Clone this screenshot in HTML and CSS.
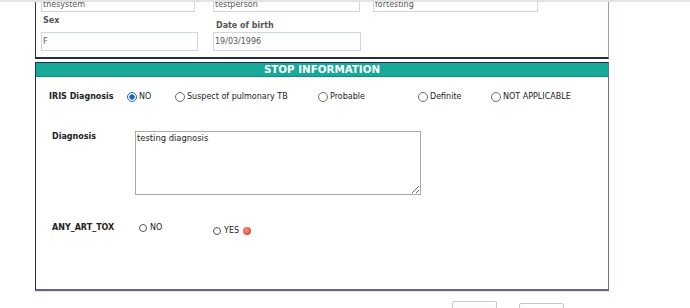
FILE: index.html
```html
<!DOCTYPE html>
<html>
<head lang="en">
    <meta charset="UTF-8">
    <title>Stop information</title>
    <link rel="stylesheet" href="styles.css">
</head>
<body>
<div class="topbar"></div>
<div class="page">
    <div class="patient">
        <div class="row">
            <input class="txt cut w154" type="text" value="thesystem"/>
            <input class="txt cut w147" type="text" value="testperson"/>
            <input class="txt cut w165" type="text" value="fortesting"/>
        </div>
        <div class="row">
            <div class="field">
                <label class="lbl sex">Sex</label>
                <input class="txt w157" type="text" value="F"/>
            </div>
            <div class="field">
                <label class="lbl dob">Date of birth</label>
                <input class="txt w148" type="text" value="19/03/1996"/>
            </div>
        </div>
    </div>

    <div class="stop">
        <div class="stop-head">STOP INFORMATION</div>
        <div class="stop-body">
            <div class="iris">
                <span class="q">IRIS Diagnosis</span>
                <label class="opt o48"><input type="radio" name="iris" checked/>NO</label>
                <label class="opt o143"><input type="radio" name="iris"/>Suspect of pulmonary TB</label>
                <label class="opt o100"><input type="radio" name="iris"/>Probable</label>
                <label class="opt o73"><input type="radio" name="iris"/>Definite</label>
                <label class="opt"><input type="radio" name="iris"/>NOT APPLICABLE</label>
            </div>
            <div class="diag">
                <span class="q">Diagnosis</span>
                <textarea>testing diagnosis</textarea>
            </div>
            <div class="tox">
                <span class="q">ANY_ART_TOX</span>
                <label class="opt small o74"><input type="radio" name="tox"/>NO</label>
                <label class="opt small yes"><input type="radio" name="tox"/>YES<span class="dot"></span></label>
            </div>
        </div>
    </div>

    <div class="buttons">
        <button class="btn"></button>
        <button class="btn low"></button>
    </div>
</div>
</body>
</html>
```

FILE: styles.css
```css
*{
    padding: 0;
    margin: 0;
    box-sizing: border-box;
}
html, body{
    height: 100%;
    overflow: hidden;
}
body{
    background: #fff;
    font-family: "DejaVu Sans", Verdana, sans-serif;
    font-size: 8px;
    color: #222;
}
.topbar{
    position: fixed;
    left: 0;
    top: 0;
    width: 100%;
    height: 2px;
    background: #e3e3e3;
    z-index: 2;
}
.page{
    margin-left: 35px;
    width: 574px;
}

/* patient box (scrolled, top cut off) */
.patient{
    margin-top: -8px;
    padding: 0 0 6px 5px;
    border-left: 1px solid #2c2c4a;
    border-right: 1px solid #9a9acc;
    border-bottom: 2px solid #2c2c4a;
}
.row{
    display: flex;
}
.row > .txt:nth-child(1){ margin-right: 18px; }
.row > .txt:nth-child(2){ margin-right: 13px; }
.field{
    display: flex;
    flex-direction: column;
    width: 172px;
}
.lbl{
    font-weight: bold;
    color: #555;
    line-height: 10px;
    padding-left: 2px;
}
.lbl.sex{ margin: 4px 0 6px; }
.lbl.dob{ margin: 9px 0 1px; padding-left: 3px; }
.txt{
    height: 20px;
    border: 1px solid #c9d9df;
    font-family: inherit;
    font-size: 8px;
    color: #555;
    padding: 0 1px;
    outline: none;
}
.txt.cut{ padding-top: 5px; }
.field .txt{ height: 19px; }
.w154{ width: 154px; }
.w147{ width: 147px; }
.w165{ width: 165px; }
.w157{ width: 157px; }
.w148{ width: 148px; }

/* stop information */
.stop{
    margin-top: 3px;
    border-top: 1px solid #2a2a48;
    border-left: 1px solid #2a2a48;
    border-right: 1px solid #6a6aae;
    border-bottom: 2px solid #62628a;
    box-shadow: 0 1px 1px #e4e4ea;
}
.stop-head{
    height: 14px;
    background: #18a999;
    border-bottom: 1px solid #0f8b7e;
    color: #fff;
    font-weight: bold;
    font-size: 10.3px;
    line-height: 13px;
    text-align: center;
}
.stop-body{
    height: 212px;
    padding-top: 14px;
}
.q{
    font-weight: bold;
    line-height: 10px;
}
.iris{
    display: flex;
    align-items: center;
    padding-left: 13px;
    height: 12px;
}
.iris .q{ width: 78px; }
.opt{
    display: flex;
    align-items: center;
    line-height: 12px;
}
.o48{ width: 48px; }
.o143{ width: 143px; }
.o100{ width: 100px; }
.o73{ width: 73px; }
.o74{ width: 74px; }
.opt input{
    appearance: none;
    -webkit-appearance: none;
    width: 10px;
    height: 10px;
    border: 1px solid #6e6e6e;
    border-radius: 50%;
    background: #fff;
    margin-right: 2px;
}
.opt input:checked{
    border-color: #1b64c6;
    background: radial-gradient(circle, #1b64c6 0, #1b64c6 2.4px, #fff 3px);
}
.opt.small input{
    width: 8px;
    height: 8px;
    border-color: #555;
    margin-right: 3px;
}
.diag{
    display: flex;
    margin-top: 28px;
    padding-left: 16px;
}
.diag .q{
    width: 83px;
    margin-top: 1px;
}
.diag textarea{
    width: 286px;
    height: 64px;
    border: 1px solid #a9a9a9;
    font-family: inherit;
    font-size: 8.4px;
    color: #222;
    padding: 1px 1px;
    outline: none;
}
.tox{
    display: flex;
    align-items: flex-start;
    margin-top: 28px;
    padding-left: 16px;
}
.tox .q{ width: 87px; }
.tox .opt{ line-height: 10px; }
.yes{ margin-top: 3px; }
.dot{
    width: 8px;
    height: 8px;
    margin-left: 4px;
    border-radius: 50%;
    background: radial-gradient(circle at 40% 40%, #ff9a86, #e9432f 70%);
}

.buttons{
    display: flex;
    align-items: flex-start;
    gap: 22px;
    padding-left: 417px;
    margin-top: 10px;
}
.btn{
    width: 45px;
    height: 22px;
    border: 1px solid #c8c8c8;
    border-radius: 2px;
    background: linear-gradient(#fff, #f0f0f0);
}
.btn.low{ margin-top: 2px; }
```
